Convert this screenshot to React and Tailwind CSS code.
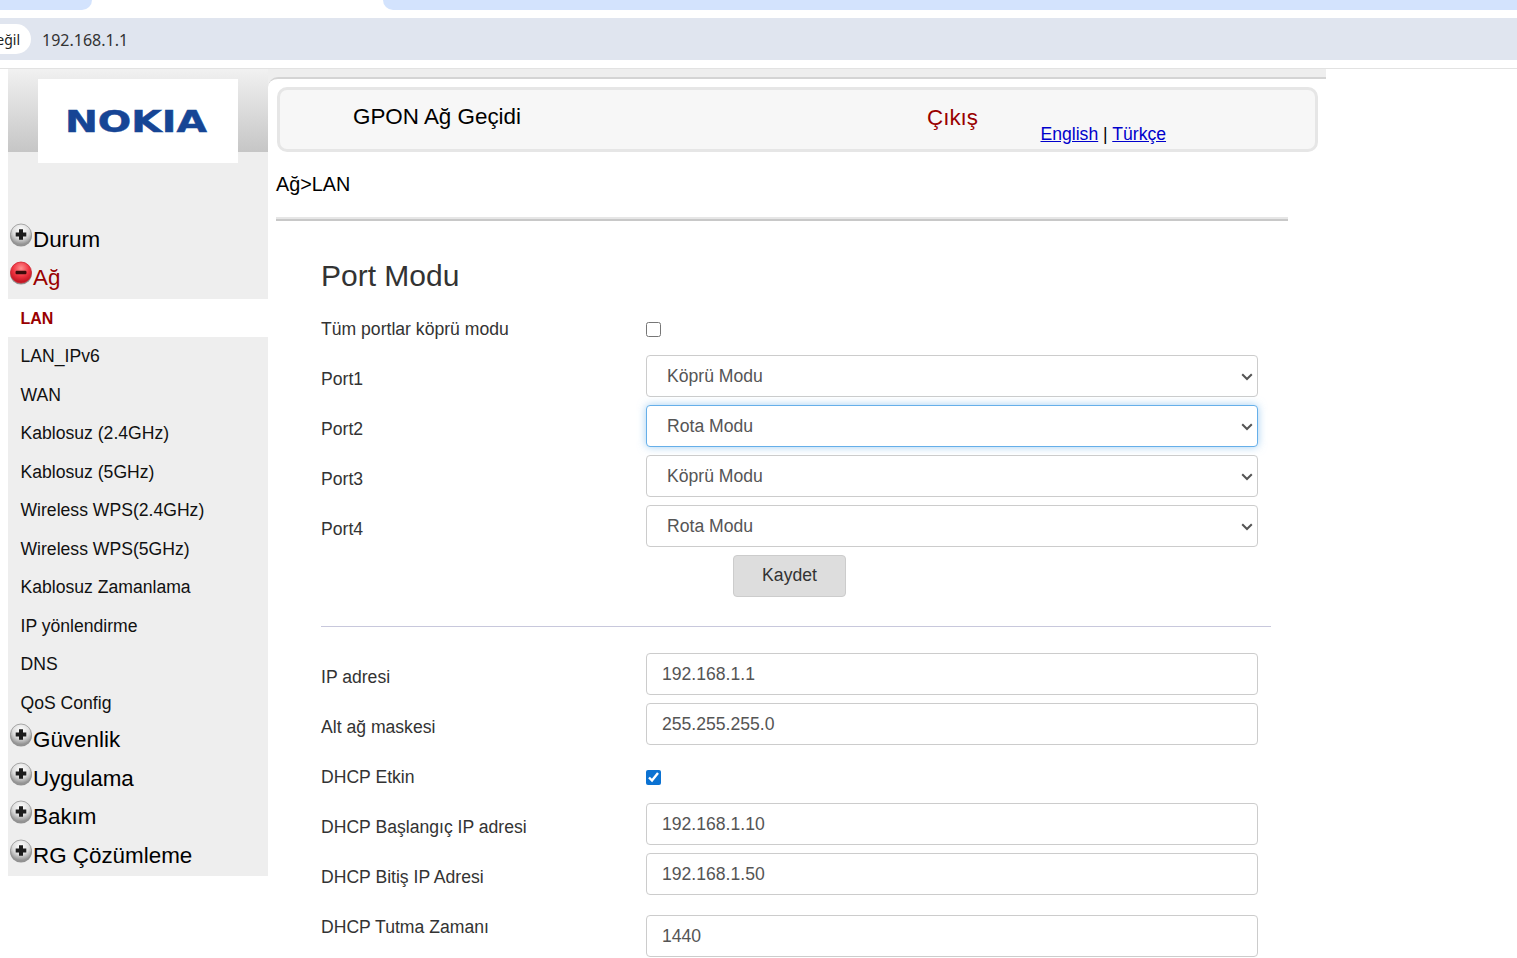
const menuTop = ["Güvenlik", "Uygulama", "Bakım", "RG Çözümleme"];
const subItems = [
  "LAN",
  "LAN_IPv6",
  "WAN",
  "Kablosuz (2.4GHz)",
  "Kablosuz (5GHz)",
  "Wireless WPS(2.4GHz)",
  "Wireless WPS(5GHz)",
  "Kablosuz Zamanlama",
  "IP yönlendirme",
  "DNS",
  "QoS Config",
];

function Ball({ open }) {
  const id = open ? "ballRed" : "ballGray";
  return (
    <svg width="24" height="25" viewBox="0 0 24 25" className="shrink-0">
      <defs>
        <radialGradient id={id} cx="50%" cy="30%" r="70%">
          <stop offset="0%" stopColor={open ? "#ff9090" : "#ffffff"} />
          <stop offset="55%" stopColor={open ? "#ee3340" : "#dedede"} />
          <stop offset="100%" stopColor={open ? "#b8101c" : "#8a8a8a"} />
        </radialGradient>
      </defs>
      <ellipse cx="12" cy="13" rx="10.8" ry="10.5" fill="#808080" opacity="0.85" />
      <circle cx="12" cy="11.5" r="10.5" fill={`url(#${id})`} stroke={open ? "#d0202c" : "#969696"} strokeWidth="0.8" />
      {open ? (
        <rect x="6.5" y="9.7" width="11" height="3.6" rx="1.2" fill="#3a0a0a" />
      ) : (
        <path d="M10 6.2h4v3.3h3.3v4H14v3.3h-4v-3.3H6.7v-4H10z" fill="#1c1c1c" />
      )}
    </svg>
  );
}

function TopItem({ label, open }) {
  return (
    <div className="flex h-[38.5px] items-start pl-[1px] pt-[1px]">
      <Ball open={open} />
      <span className={`mt-[2px] text-[22.4px] leading-[30px] ${open ? "text-[#990000]" : "text-black"}`}>{label}</span>
    </div>
  );
}

function Sidebar() {
  return (
    <div className="h-[807px] w-[260px] shrink-0 bg-[#eeeeee]">
      <div className="h-[83px] bg-gradient-to-b from-[#f1f1f1] to-[#c6c6c6] pl-[30px] pt-[10px]">
        <div className="flex h-[84px] w-[200px] items-center justify-center overflow-hidden bg-white pr-[4px]">
          <span className="scale-x-[1.27] text-[31px] font-bold leading-none text-[#164595] [-webkit-text-stroke:0.5px_#164595] font-['DejaVu_Sans',sans-serif]">
            NOKIA
          </span>
        </div>
      </div>
      <div className="h-[69.5px]" />
      <TopItem label="Durum" />
      <TopItem label="Ağ" open />
      {subItems.map((item, i) => (
        <div
          key={item}
          className={`flex h-[38.5px] items-center pl-[12.5px] ${
            i === 0 ? "bg-white pt-[2px] text-[16px] font-bold text-[#990000]" : "text-[17.6px] text-[#111]"
          }`}
        >
          {item}
        </div>
      ))}
      {menuTop.map((item) => (
        <TopItem key={item} label={item} />
      ))}
    </div>
  );
}

function Row({ label, children }) {
  return (
    <div className="mb-2 flex h-[42px]">
      <label className="w-[325px] shrink-0 pt-[13px] text-[17.6px] leading-[22px] text-[#333]">{label}</label>
      <div className="w-[612px]">{children}</div>
    </div>
  );
}

function SelectBox({ value, focused }) {
  return (
    <div className="relative">
      <select
        defaultValue={value}
        className={`h-[42px] w-full appearance-none rounded-[4px] border bg-white pl-5 text-[17.6px] text-[#555] outline-none ${
          focused
            ? "border-[#66afe9] shadow-[0_0_8px_rgba(102,175,233,0.6)]"
            : "border-[#cccccc]"
        }`}
      >
        <option>Köprü Modu</option>
        <option>Rota Modu</option>
      </select>
      <svg width="12" height="8" viewBox="0 0 12 8" className="pointer-events-none absolute right-[5px] top-[18px]">
        <polyline points="1.2,1.2 6,6 10.8,1.2" fill="none" stroke="#555" strokeWidth="2" />
      </svg>
    </div>
  );
}

function TextBox({ value }) {
  return (
    <input
      readOnly
      defaultValue={value}
      className="h-[42px] w-full rounded-[4px] border border-[#cccccc] bg-white pl-[15px] text-[17.6px] text-[#555] outline-none"
    />
  );
}

function Form() {
  return (
    <div className="pl-[45px]">
      <h2 className="h-[84px] pt-[38px] text-[30px] leading-[33px] text-[#333]">Port Modu</h2>

      <Row label="Tüm portlar köprü modu">
        <input type="checkbox" className="mt-[17px] block h-[15px] w-[15px]" />
      </Row>
      <Row label="Port1"><SelectBox value="Köprü Modu" /></Row>
      <Row label="Port2"><SelectBox value="Rota Modu" focused /></Row>
      <Row label="Port3"><SelectBox value="Köprü Modu" /></Row>
      <Row label="Port4"><SelectBox value="Rota Modu" /></Row>

      <div className="pl-[412px]">
        <button className="h-[42px] w-[113px] rounded-[4px] border border-[#cccccc] bg-[#dddddd] pb-[2px] text-[17.6px] text-[#333]">
          Kaydet
        </button>
      </div>

      <div className="mb-[26px] mt-[29px] h-[1px] w-[950px] bg-[#c8c8dc]" />

      <Row label="IP adresi"><TextBox value="192.168.1.1" /></Row>
      <Row label="Alt ağ maskesi"><TextBox value="255.255.255.0" /></Row>
      <Row label="DHCP Etkin">
        <input type="checkbox" defaultChecked className="mt-[17px] block h-[15px] w-[15px] accent-[#0b72d2]" />
      </Row>
      <Row label="DHCP Başlangıç IP adresi"><TextBox value="192.168.1.10" /></Row>
      <Row label="DHCP Bitiş IP Adresi"><TextBox value="192.168.1.50" /></Row>
      <Row label="DHCP Tutma Zamanı">
        <div className="pt-3"><TextBox value="1440" /></div>
      </Row>
    </div>
  );
}

function Main() {
  return (
    <div className="w-[1058px] shrink-0">
      <div className="bg-[#eeeeee]">
        <div className="h-[8px]" />
        <div className="h-[10px] rounded-tl-[10px] border-t-2 border-[#d4d4d4] bg-white" />
      </div>
      <div className="ml-[9px] flex h-[65px] w-[1041px] rounded-[10px] border-[3px] border-[#e6e6e6] bg-[#f7f7f7] text-[22.4px]">
        <div className="w-[647px] pl-[73px] pt-[12px] leading-[30px] text-black">GPON Ağ Geçidi</div>
        <div className="w-[113.5px] pt-[13px] leading-[30px] text-[#990000]">Çıkış</div>
        <div className="pt-[32px] text-[17.6px] leading-[24px] text-black">
          <a href="#" className="text-[#0000cc] underline">English</a>
          {" | "}
          <a href="#" className="text-[#0000cc] underline">Türkçe</a>
        </div>
      </div>
      <div className="ml-2 w-[1012px]">
        <div className="flex h-[65px] items-center pt-[1px] text-[19.8px] text-black">Ağ&gt;LAN</div>
        <div className="h-[4px] border-b-2 border-[#c8c8c8] bg-[#e6e6e6]" />
        <Form />
      </div>
    </div>
  );
}

export default function App() {
  return (
    <div className="h-[958px] w-[1517px] overflow-hidden bg-white font-['Liberation_Sans',Arial,sans-serif]">
      <div className="flex h-[10px]">
        <div className="w-[92px] rounded-br-[10px] bg-[#d3e3fd]" />
        <div className="w-[291px]" />
        <div className="flex-1 rounded-bl-[10px] bg-[#d3e3fd]" />
      </div>
      <div className="mt-2 flex h-[42px] items-center bg-[#e0e5ef]">
        <div className="flex h-[30px] w-[31px] items-center justify-end overflow-hidden whitespace-nowrap rounded-r-full bg-white pr-[11px] text-[14px] font-['Noto_Sans',sans-serif] text-[#222]">
          değil
        </div>
        <span className="ml-[11px] pt-[1px] text-[16px] text-[#333] font-['Noto_Sans',sans-serif]">192.168.1.1</span>
      </div>
      <div className="mt-2 h-[1px] bg-[#e2e2e2]" />
      <div className="flex pl-2">
        <Sidebar />
        <Main />
      </div>
    </div>
  );
}
